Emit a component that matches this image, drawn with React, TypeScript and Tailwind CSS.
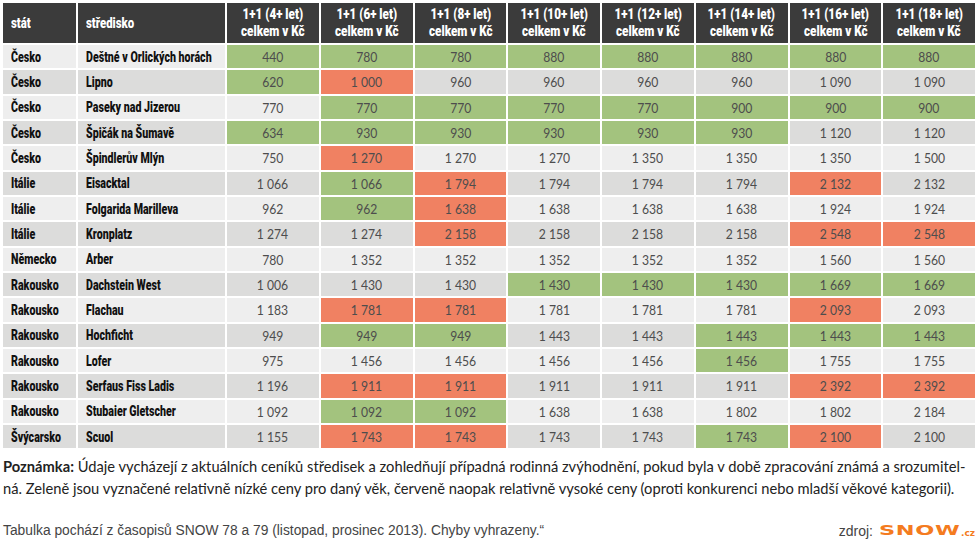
const heads = ["4+", "6+", "8+", "10+", "12+", "14+", "16+", "18+"]

const rows: [string, string, string][] = [
  ["Česko", "Deštné v Orlických horách", "440g 780g 780g 880g 880g 880g 880g 880g"],
  ["Česko", "Lipno", "620g 1000r 960 960 960 960 1090 1090"],
  ["Česko", "Paseky nad Jizerou", "770 770g 770g 770g 770g 900g 900g 900g"],
  ["Česko", "Špičák na Šumavě", "634g 930g 930g 930g 930g 930g 1120 1120"],
  ["Česko", "Špindlerův Mlýn", "750 1270r 1270 1270 1350 1350 1350 1500"],
  ["Itálie", "Eisacktal", "1066 1066g 1794r 1794 1794 1794 2132r 2132"],
  ["Itálie", "Folgarida Marilleva", "962 962g 1638r 1638 1638 1638 1924 1924"],
  ["Itálie", "Kronplatz", "1274 1274 2158r 2158 2158 2158 2548r 2548r"],
  ["Německo", "Arber", "780 1352 1352 1352 1352 1352 1560 1560"],
  ["Rakousko", "Dachstein West", "1006 1430 1430 1430g 1430g 1430g 1669g 1669g"],
  ["Rakousko", "Flachau", "1183 1781r 1781r 1781 1781 1781 2093r 2093"],
  ["Rakousko", "Hochficht", "949 949g 949g 1443 1443 1443g 1443g 1443g"],
  ["Rakousko", "Lofer", "975 1456 1456 1456 1456 1456g 1755 1755"],
  ["Rakousko", "Serfaus Fiss Ladis", "1196 1911r 1911r 1911 1911 1911 2392r 2392r"],
  ["Rakousko", "Stubaier Gletscher", "1092 1092g 1092g 1638 1638 1802 1802 2184"],
  ["Švýcarsko", "Scuol", "1155 1743r 1743r 1743 1743 1743g 2100r 2100"],
]

// no condensed face installed, so squeeze Roboto heavy horizontally
const cond = "font-['Roboto',sans-serif] font-black inline-block whitespace-nowrap"

function fmt(v: string) {
  return v.length > 3 ? v.slice(0, -3) + " " + v.slice(-3) : v
}

export default function App() {
  return (
    <div className="w-[980px] h-[560px] bg-white overflow-hidden pt-[3px] pl-[3px]">
      <div className="w-[972px] grid grid-cols-[73px_147px_repeat(8,minmax(0,1fr))] grid-rows-[40px_repeat(16,23.33px)] gap-[2px]">
        {/* header */}
        <div className="bg-[#3b3b3b] text-white text-[15px] flex items-center pl-2">
          <span className={`${cond} scale-x-[0.76] origin-left`}>stát</span>
        </div>
        <div className="bg-[#3b3b3b] text-white text-[15px] flex items-center pl-2">
          <span className={`${cond} scale-x-[0.76] origin-left`}>středisko</span>
        </div>
        {heads.map((h) => (
          <div key={h} className="bg-[#3b3b3b] text-white text-[15px] leading-[17px] flex flex-col items-center justify-center">
            <span className={`${cond} scale-x-[0.78] origin-center`}>1+1 ({h} let)</span>
            <span className={`${cond} scale-x-[0.78] origin-center`}>celkem v Kč</span>
          </div>
        ))}

        {rows.map(([country, resort, vals], i) => {
          const base = i % 2 === 0 ? "bg-[#eeeeee]" : "bg-[#dcdcdb]"
          return [
            <div key={`c${i}`} className={`${base} text-[14px] text-[#111] flex items-center pl-2 pt-px`}>
              <span className={`${cond} scale-x-[0.76] origin-left`}>{country}</span>
            </div>,
            <div key={`r${i}`} className={`${base} text-[14px] text-[#111] flex items-center pl-2 pt-px`}>
              <span className={`${cond} scale-x-[0.76] origin-left`}>{resort}</span>
            </div>,
            ...vals.split(" ").map((t, j) => {
              const tone = t.slice(-1)
              const v = tone === "g" || tone === "r" ? t.slice(0, -1) : t
              const bg = tone === "g" ? "bg-[#a3c37e]" : tone === "r" ? "bg-[#f08162]" : base
              return (
                <div key={`v${i}-${j}`} className={`${bg} font-['Lato',sans-serif] text-[13.5px] text-[#4d4d4d] flex items-center justify-center whitespace-nowrap pt-px`}>
                  <span className="inline-block scale-x-[0.9]">{fmt(v)}</span>
                </div>
              )
            }),
          ]
        })}
      </div>

      {/* note */}
      <div className="mt-[7px] font-['Lato',sans-serif] text-[14.7px] leading-[22px] text-[#222] whitespace-nowrap">
        <div>
          <span className="font-bold">Poznámka:</span> Údaje vycházejí z aktuálních ceníků středisek a zohledňují případná rodinná zvýhodnění, pokud byla v době zpracování známá a srozumitel-
        </div>
        <div>ná. Zeleně jsou vyznačené relativně nízké ceny pro daný věk, červeně naopak relativně vysoké ceny (oproti konkurenci nebo mladší věkové kategorii).</div>
      </div>

      {/* footer */}
      <div className="mt-[22px] w-[972px] flex items-center justify-between font-['Liberation_Sans',Arial,sans-serif] text-[13.8px] text-[#444]">
        <span>Tabulka pochází z časopisů SNOW 78 a 79 (listopad, prosinec 2013). Chyby vyhrazeny.“</span>
        <span className="flex items-baseline gap-[6px]">
          <span className="text-[14px]">zdroj:</span>
          <span className="flex items-baseline text-[#f47b20]">
            <span className="inline-block w-[82px] font-['DejaVu_Sans',sans-serif] font-bold text-[17px] leading-none tracking-[0.5px] origin-left scale-x-[1.32] scale-y-[0.8]">SNOW</span>
            <span className="font-['DejaVu_Sans',sans-serif] font-bold text-[9px]">.cz</span>
          </span>
        </span>
      </div>
    </div>
  )
}
